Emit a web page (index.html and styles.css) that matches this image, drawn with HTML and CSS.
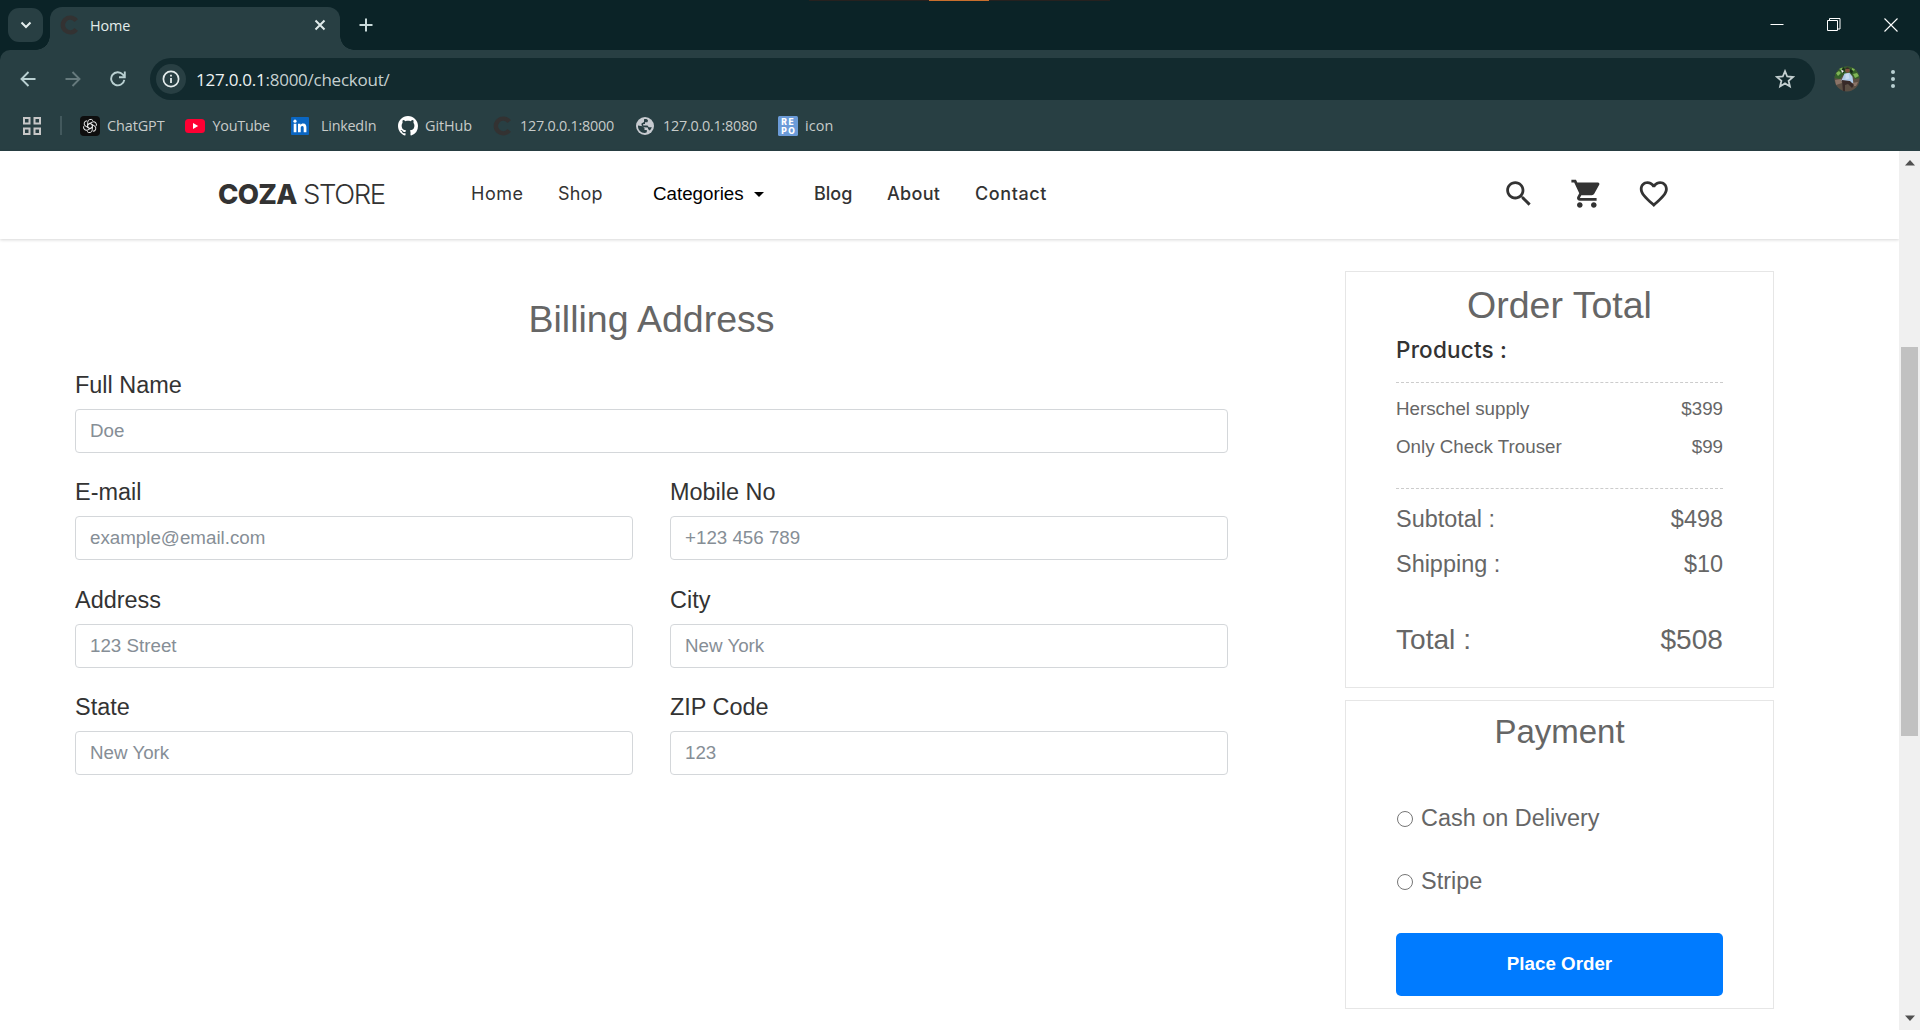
FILE: index.html
```html
<!DOCTYPE html>
<html lang="en">
<head>
<meta charset="utf-8">
<title>Home</title>
<link rel="stylesheet" href="styles.css">
</head>
<body>
<div class="window">
  <div class="titlebar">
    <div class="drag-handle"></div>
    <div class="tab-search"><svg width="12" height="12" viewBox="0 0 12 12"><path d="M1.500 3.500 6 8l4.500-4.500" fill="none" stroke="#e4eeee" stroke-width="2"/></svg></div>
    <div class="tab">
      <svg class="tab-icon" width="20" height="20" viewBox="0 0 20 20"><path d="M16.200 5.600A7.400 7.400 0 1 0 16.200 14.400" fill="none" stroke="#333232" stroke-width="4.400"/></svg>
      <span class="tab-title">Home</span>
      <svg class="tab-close" width="12" height="12" viewBox="0 0 12 12"><path d="M1.500 1.500l9 9M10.500 1.500l-9 9" stroke="#dfeaea" stroke-width="2"/></svg>
    </div>
    <svg class="new-tab" width="14" height="14" viewBox="0 0 14 14"><path d="M7 .5v13M.5 7h13" stroke="#c9dada" stroke-width="2"/></svg>
    <div class="controls">
      <svg width="14" height="14" viewBox="0 0 14 14"><path d="M.5 6.500h13" stroke="#fff"/></svg>
      <svg width="14" height="14" viewBox="0 0 14 14"><path d="M.5 2.500h10v10H.5zM2.500 2.500v-2h10.500v10.500h-2" fill="none" stroke="#fff"/></svg>
      <svg width="14" height="14" viewBox="0 0 14 14"><path d="M.5.5l13 13M13.500.5l-13 13" stroke="#fff" stroke-width="1.100"/></svg>
    </div>
  </div>

  <div class="toolbar">
    <svg class="nav-icon" width="16" height="16" viewBox="0 0 16 16"><path d="M15.500 8H2M8.500 1 1.500 8l7 7" fill="none" stroke="#b9d0d2" stroke-width="1.900"/></svg>
    <svg class="nav-icon" width="16" height="16" viewBox="0 0 16 16"><path d="M.5 8H14M7.500 1l7 7-7 7" fill="none" stroke="#667a7d" stroke-width="1.900"/></svg>
    <svg class="nav-icon" width="16" height="16" viewBox="0 0 16 16"><path d="M14.300 8.800A6.600 6.600 0 1 1 12.800 3.500L14.600 5.400" fill="none" stroke="#b9d0d2" stroke-width="1.900"/><path d="M14.800.5v5.700H9" fill="none" stroke="#b9d0d2" stroke-width="1.900"/></svg>
    <div class="omnibox">
      <span class="site-info"><svg width="18" height="18" viewBox="0 0 18 18"><circle cx="9" cy="9" r="7.600" fill="none" stroke="#e4ecec" stroke-width="1.700"/><path d="M9 8v5M9 4.700v1.900" stroke="#e4ecec" stroke-width="1.800"/></svg></span>
      <span class="url"><b>127.0.0.1</b>:8000/checkout/</span>
      <svg class="star" width="20" height="20" viewBox="0 0 20 20"><path d="M10 2.200l2.200 5.300 5.800.5-4.400 3.800 1.300 5.600-4.900-3-4.900 3 1.300-5.600L2 8l5.800-.5z" fill="none" stroke="#c3cfd0" stroke-width="1.800"/></svg>
    </div>
    <svg class="avatar" width="26" height="26" viewBox="0 0 26 26"><defs><clipPath id="face"><circle cx="13" cy="13" r="12.500"/></clipPath></defs><g clip-path="url(#face)"><path fill="#5b4f44" d="M0 0h26v26H0z"/><path fill="#35602a" d="M0 0h26v12l-5 1-4-5-8 1-3 4-6-1z"/><path fill="#7fb455" d="M2 7l3-2 2 2-3 3zM19 8l4-1 2 3-4 2zM5 2l3-1 1 2-3 1zM18 2l3 1-1 2-2-1z"/><path fill="#172c17" d="M9 1l2 2-1 4-3-1zM16 3l3 2-1 3-2-2z"/><path fill="#f0f5ee" d="M7 3.500l3 1.500-2 2z"/><path fill="#8a7468" d="M1 14l6-1 1 4-6 2zM18 17l6-1-2 4-4 0z"/><circle cx="13.500" cy="4.500" r="2.300" fill="#82513f"/><path fill="#3a2b2b" d="M11 3q2.500-3.500 5 0z"/><path fill="#afcbe8" d="M10.500 7.500l5-.8 3 4 .8 6-3 .8-5-2-4-1z"/><path fill="#c9dcf0" d="M11.500 8l3-.5 1 5-4 1z"/><path fill="#382a28" d="M8 14l8 1 4 4-2 3-4-4-3 1 0 7H9z"/></g></svg>
    <svg class="menu" width="6" height="20" viewBox="0 0 6 20"><g fill="#b9d0d2"><circle cx="3" cy="3" r="2"/><circle cx="3" cy="10" r="2"/><circle cx="3" cy="17" r="2"/></g></svg>
  </div>

  <div class="bookmarks">
    <svg class="apps" width="18" height="18" viewBox="0 0 18 18"><path d="M1 1h5.500v5.500H1zM11.500 1H17v5.500h-5.500zM1 11.500h5.500V17H1zM11.500 11.500H17V17h-5.500z" fill="none" stroke="#c7c7c7" stroke-width="2"/></svg>
    <span class="divider"></span>
    <span class="bm chatgpt"><svg width="20" height="20" viewBox="0 0 20 20"><rect width="20" height="20" rx="4" fill="#0e0e0e"/><g fill="none" stroke="#e5e5e5" stroke-width="1"><path id="petal" d="M10 12.700 7.700 11.400V6.300a2.900 2.900 0 0 1 5.400-1.500"/><use href="#petal" transform="rotate(60 10 10)"/><use href="#petal" transform="rotate(120 10 10)"/><use href="#petal" transform="rotate(180 10 10)"/><use href="#petal" transform="rotate(240 10 10)"/><use href="#petal" transform="rotate(300 10 10)"/></g></svg><span class="bm-text">ChatGPT</span></span>
    <span class="bm youtube"><svg width="20" height="14" viewBox="0 0 20 14"><rect width="20" height="14" rx="3.500" fill="#ff0033"/><path d="M8 4l5.200 3L8 10z" fill="#fff"/></svg><span class="bm-text">YouTube</span></span>
    <span class="bm linkedin"><svg width="18" height="18" viewBox="0 0 18 18"><rect width="18" height="18" rx="1" fill="#0a66c2"/><g fill="#fff"><circle cx="4" cy="4.200" r="1.600"/><path d="M2.700 6.800h2.700v8.500H2.700zM7 6.800h2.500V8c.4-.7 1.300-1.400 2.700-1.400 2.600 0 3.200 1.700 3.200 4v4.700h-2.700v-4.200c0-1-.1-2.200-1.400-2.200s-1.600 1-1.600 2.200v4.200H7z"/></g></svg><span class="bm-text">LinkedIn</span></span>
    <span class="bm github"><svg width="20" height="20" viewBox="0 0 16 16"><path fill="#fff" d="M8 0C3.580 0 0 3.580 0 8c0 3.540 2.290 6.530 5.470 7.590.4.070.55-.17.55-.38 0-.19-.01-.82-.01-1.490-2.010.37-2.530-.49-2.690-.94-.09-.23-.48-.94-.82-1.130-.28-.15-.68-.52-.01-.53.63-.01 1.080.58 1.230.82.72 1.210 1.870.87 2.330.66.07-.52.28-.87.51-1.070-1.780-.2-3.640-.89-3.640-3.950 0-.87.31-1.590.82-2.150-.08-.2-.36-1.020.08-2.120 0 0 .67-.21 2.200.82.64-.18 1.320-.27 2-.27s1.360.09 2 .27c1.530-1.040 2.200-.82 2.200-.82.44 1.100.16 1.920.08 2.120.51.56.82 1.270.82 2.150 0 3.070-1.870 3.750-3.650 3.950.29.25.54.73.54 1.480 0 1.070-.01 1.930-.01 2.200 0 .21.15.46.55.38A8.010 8.010 0 0 0 16 8c0-4.420-3.580-8-8-8z"/></svg><span class="bm-text">GitHub</span></span>
    <span class="bm local"><svg width="20" height="20" viewBox="0 0 20 20"><path d="M16.200 5.600A7.400 7.400 0 1 0 16.200 14.400" fill="none" stroke="#333232" stroke-width="4.400"/></svg><span class="bm-text">127.0.0.1:8000</span></span>
    <span class="bm globe"><svg width="18" height="18" viewBox="0 0 18 18"><circle cx="9" cy="9" r="9" fill="#c7cbd0"/><path d="M2 8.500l4.500.7 2 2v1.800h2.300v2.300c-.7.500-1.500.7-2.300.7C4.900 16 2 13 2 9.500zM8 2.200c2.200-.6 3 0 4 .8l-.5 2.200H9v1.800H7.200v1.500h4.300l1.300 1.800h3c-.5 1.500-1.300 2.500-2 3.200l-1.600-1.300-.5-1.600-4-.3L5.500 8.300V6.500L8 5z" fill="#283f43"/></svg><span class="bm-text">127.0.0.1:8080</span></span>
    <span class="bm repo"><svg width="20" height="20" viewBox="0 0 20 20"><rect width="20" height="20" rx="1.500" fill="#6b9bd8"/><g class="repo-letters"><text x="3.300" y="9" textLength="12.500">RE</text><text x="3.300" y="17.500" textLength="13.500">PO</text></g></svg><span class="bm-text">icon</span></span>
  </div>

  <div class="viewport">
    <div class="page">
      <header class="header">
        <div class="logo"><b>COZA</b> <span>STORE</span></div>
        <nav class="nav">
          <a class="n-home">Home</a><a class="n-shop">Shop</a>
          <a class="n-cat">Categories<i class="caret"></i></a>
          <a class="n-blog">Blog</a><a class="n-about">About</a><a class="n-contact">Contact</a>
        </nav>
        <div class="actions">
          <svg viewBox="0 0 24 24"><path d="M15.500 14h-.79l-.28-.27C15.410 12.590 16 11.110 16 9.500 16 5.910 13.090 3 9.500 3S3 5.910 3 9.500 5.910 16 9.500 16c1.610 0 3.090-.59 4.230-1.570l.27.28v.79l5 4.990L20.490 19l-4.990-5zm-6 0C7.010 14 5 11.990 5 9.500S7.010 5 9.500 5 14 7.010 14 9.500 11.990 14 9.500 14z"/></svg>
          <svg viewBox="0 0 24 24"><path d="M7 18c-1.100 0-1.990.9-1.990 2S5.900 22 7 22s2-.9 2-2-.9-2-2-2zM1 2v2h2l3.600 7.590-1.350 2.450c-.16.280-.25.610-.25.960 0 1.100.9 2 2 2h12v-2H7.420c-.14 0-.25-.11-.25-.25l.03-.12.9-1.630h7.450c.75 0 1.410-.41 1.750-1.030l3.580-6.490A1.003 1.003 0 0 0 20 4H5.210l-.94-2H1zm16 16c-1.100 0-1.990.9-1.990 2s.89 2 1.990 2 2-.9 2-2-.9-2-2-2z"/></svg>
          <svg viewBox="0 0 24 24"><path d="M16.500 3c-1.740 0-3.410.81-4.500 2.090C10.910 3.810 9.240 3 7.500 3 4.420 3 2 5.420 2 8.500c0 3.780 3.400 6.860 8.550 11.540L12 21.350l1.450-1.320C18.600 15.360 22 12.280 22 8.500 22 5.420 19.580 3 16.500 3zm-4.400 15.550l-.1.100-.1-.1C7.140 14.240 4 11.390 4 8.500 4 6.500 5.500 5 7.500 5c1.540 0 3.040.99 3.570 2.360h1.870C13.460 5.990 14.960 5 16.500 5c2 0 3.500 1.500 3.500 3.500 0 2.890-3.140 5.740-7.900 10.050z"/></svg>
        </div>
      </header>

      <main class="checkout">
        <form class="billing">
          <h2 class="heading">Billing Address</h2>
          <div class="fields">
            <label class="field wide">Full Name<input type="text" placeholder="Doe"></label>
            <label class="field">E-mail<input type="text" placeholder="example@email.com"></label>
            <label class="field">Mobile No<input type="text" placeholder="+123 456 789"></label>
            <label class="field">Address<input type="text" placeholder="123 Street"></label>
            <label class="field">City<input type="text" placeholder="New York"></label>
            <label class="field">State<input type="text" placeholder="New York"></label>
            <label class="field">ZIP Code<input type="text" placeholder="123"></label>
          </div>
        </form>

        <aside class="summary">
          <section class="card order">
            <h2 class="heading">Order Total</h2>
            <h3 class="products-title">Products :</h3>
            <div class="products">
              <div class="row"><span>Herschel supply</span><span>$399</span></div>
              <div class="row"><span>Only Check Trouser</span><span>$99</span></div>
            </div>
            <div class="sums">
              <div class="row"><span>Subtotal :</span><span>$498</span></div>
              <div class="row"><span>Shipping :</span><span>$10</span></div>
            </div>
            <div class="row total"><span>Total :</span><span>$508</span></div>
          </section>
          <section class="card payment">
            <h2 class="pay-title">Payment</h2>
            <label class="option"><input type="radio" name="pay">Cash on Delivery</label>
            <label class="option"><input type="radio" name="pay">Stripe</label>
            <button type="button" class="place">Place Order</button>
          </section>
        </aside>
      </main>
    </div>
    <div class="scrollbar">
      <svg width="10" height="6" viewBox="0 0 10 6"><path d="M5 0l5 5.500H0z" fill="#505050"/></svg>
      <div class="thumb"></div>
      <svg width="10" height="6" viewBox="0 0 10 6"><path d="M5 6l5-5.500H0z" fill="#505050"/></svg>
    </div>
  </div>
</div>
</body>
</html>
```
FILE: styles.css
```css
* { box-sizing: border-box; }
body { margin: 0; background: #fff; font-family: "Liberation Sans", Arial, sans-serif; }
svg { display: block; flex: none; }
.window { width: 1920px; height: 1030px; overflow: hidden; display: flex; flex-direction: column; background: #0b2327; }

/* title bar */
.titlebar { position: relative; height: 50px; flex: none; display: flex; align-items: flex-start; padding-left: 8px; font-family: "Open Sans", "Noto Sans", sans-serif; }
.drag-handle { position: absolute; top: 0; left: 809px; width: 301px; height: 1px; background: linear-gradient(90deg, #26211f 0 120px, #c96f2d 120px 180px, #26211f 180px); }
.tab-search { width: 35px; height: 34px; margin-top: 8px; border-radius: 11px; background: #283f43; display: flex; align-items: center; justify-content: center; }
.tab { position: relative; width: 290px; height: 43px; margin: 7px 0 0 7px; border-radius: 12px 12px 0 0; background: #283f43; display: flex; align-items: center; padding: 0 14px 7px 10px; }
.tab::before, .tab::after { content: ""; position: absolute; bottom: 0; width: 14px; height: 14px; }
.tab::before { left: -14px; background: radial-gradient(circle at 0 0, transparent 13.5px, #283f43 14px); }
.tab::after { right: -14px; background: radial-gradient(circle at 100% 0, transparent 13.5px, #283f43 14px); }
.tab-title { margin-left: 10px; padding-top: 2px; flex: 1; font-size: 14.4px; line-height: 20px; color: #e3eceb; letter-spacing: -0.1px; }
.new-tab { margin: 18px 0 0 18.5px; }
.controls { margin: 18px 22px 0 auto; display: flex; gap: 43px; }

/* toolbar */
.toolbar { height: 50px; flex: none; display: flex; align-items: center; padding: 8px 22px 0 19.5px; background: #283f43; border-radius: 10px 10px 0 0; }
.nav-icon { margin-right: 29px; }
.nav-icon + .nav-icon + .nav-icon { margin-right: 24.5px; }
.omnibox { width: 1665px; height: 42px; border-radius: 21px; background: #122a2e; display: flex; align-items: center; padding: 0 20px 0 6px; }
.site-info { width: 30px; height: 30px; border-radius: 50%; background: #283f43; display: flex; align-items: center; justify-content: center; }
.url { flex: 1; margin-left: 10px; padding-top: 1px; font: 17px/24px "Open Sans", "Noto Sans", sans-serif; color: #c5d0d0; letter-spacing: -0.25px; }
.url b { font-weight: 400; color: #eef3f3; }
.avatar { margin-left: 19px; }
.menu { margin-left: auto; margin-right: 2.5px; }

/* bookmarks bar */
.bookmarks { height: 51px; flex: none; display: flex; align-items: center; padding: 0 0 0 23px; background: #283f43; color: #c7cbc9; font: 14.4px/20px "Open Sans", "Noto Sans", sans-serif; }
.divider { width: 2px; height: 19px; margin: 0 18px 0 19px; background: #43595d; }
.bm { display: flex; align-items: center; flex: none; white-space: nowrap; }
.bm-text { letter-spacing: -0.25px; }
.chatgpt { width: 105px; gap: 7px; }
.chatgpt .bm-text, .github .bm-text { letter-spacing: -0.08px; }
.youtube { width: 106px; gap: 7.5px; }
.linkedin { width: 107px; gap: 12px; }
.github { width: 95px; gap: 7px; }
.local { width: 143px; gap: 7px; }
.globe { width: 142px; gap: 9px; }
.repo { gap: 7px; }
.repo .bm-text { letter-spacing: .1px; }
.repo-letters { fill: #fff; font: 800 8.5px Inter, sans-serif; }

/* viewport */
.viewport { flex: 1; min-height: 0; display: flex; background: #fff; }
.page { flex: 1; }
.scrollbar { width: 21px; background: #f0f0f0; display: flex; flex-direction: column; align-items: center; padding: 9px 0; }
.thumb { width: 17px; height: 389px; margin: 181px 0 auto; background: #c1c1c1; }

/* store header */
.header { height: 88px; display: flex; align-items: center; padding: 0 228px 2px 218px; box-shadow: 0 1px 3px rgba(0, 0, 0, .16); font-family: Inter, sans-serif; }
.logo { width: 253px; font-size: 27.5px; line-height: 34px; color: #333; letter-spacing: -1.4px; white-space: nowrap; }
.logo b { font-weight: 800; letter-spacing: -0.7px; }
.logo span { font-weight: 300; }
.nav { display: flex; align-items: baseline; font-size: 18px; line-height: 26px; color: #333; font-weight: 500; }
.n-home { width: 87px; font-weight: 400; letter-spacing: .5px; }
.n-shop { width: 95px; font-weight: 400; letter-spacing: .15px; }
.n-cat { width: 161px; display: flex; align-items: center; font: 18.75px/26px "Liberation Sans", Arial, sans-serif; color: #000; }
.caret { margin-left: 10px; border: 5px solid transparent; border-top-color: #000; border-bottom: 0; }
.n-blog { width: 73px; letter-spacing: 0; }
.n-about { width: 88px; letter-spacing: .3px; }
.n-contact { letter-spacing: .6px; }
.actions { margin-left: auto; display: flex; gap: 34px; }
.actions svg { width: 33.6px; height: 33.6px; fill: #333; }

/* checkout */
.checkout { display: flex; align-items: flex-start; padding: 32px 0 0 75px; }
.heading { margin: 0; font-size: 37.5px; line-height: 45px; font-weight: 400; color: #666; text-align: center; }
.billing { width: 1153px; padding-top: 26px; }
.fields { margin-top: 25px; display: grid; grid-template-columns: 1fr 1fr; gap: 21.4px 37px; }
.field { display: flex; flex-direction: column; gap: 5.4px; font-size: 23.44px; line-height: 36.6px; color: #333; }
.wide { grid-column: 1 / -1; }
.field input { width: 100%; height: 44px; padding: 0 14px; border: 1px solid #d4d7da; border-radius: 4px; background: #fff; font: 18.75px/28px "Liberation Sans", Arial, sans-serif; }
.field input::placeholder { color: #868e96; opacity: 1; }
.summary { width: 429px; margin-left: 117px; display: flex; flex-direction: column; gap: 12px; }
.card { border: 1px solid #e6e6e6; padding: 11px 50px 0; color: #666; }
.order { height: 417px; }
.payment { height: 309px; }
.products-title { margin: 5px 0 15px; font: 500 22.5px/34px Inter, sans-serif; color: #333; letter-spacing: .2px; }
.products { border-top: 1px dashed #ccc; border-bottom: 1px dashed #ccc; padding: 7px 0 22px; font-size: 18.75px; line-height: 38px; }
.row { display: flex; justify-content: space-between; }
.sums { padding-top: 8px; font-size: 23.44px; line-height: 45px; }
.total { margin-top: 30px; font-size: 28.1px; line-height: 45px; }
.pay-title { margin: 0 0 46px; font-size: 33px; line-height: 40px; font-weight: 400; text-align: center; }
.option { display: flex; align-items: center; height: 40px; margin-bottom: 23px; font-size: 23.44px; line-height: 40px; }
.option input { width: 16px; height: 16px; margin: 1px 8px 0 1px; }
.option:nth-of-type(2) { margin-bottom: 0; }
.place { display: block; width: 327px; height: 63px; margin-top: 32px; padding: 0 0 2px; border: 0; border-radius: 5px; background: #007bff; color: #fff; font: bold 18.75px/28px "Liberation Sans", Arial, sans-serif; }
```
